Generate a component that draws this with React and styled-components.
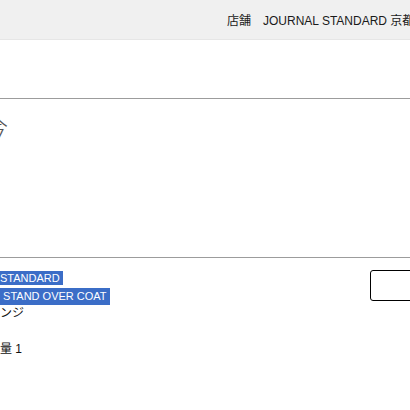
import React from 'react';
import styled, { createGlobalStyle } from 'styled-components';

const GlobalStyle = createGlobalStyle`
  html, body {
    margin: 0;
    padding: 0;
    background: #fff;
    overflow: hidden;
  }
  body {
    width: 410px;
    height: 410px;
    font-family: "Liberation Sans", "Noto Sans CJK JP", sans-serif;
    color: #111;
  }
`;

const StoreBar = styled.header`
  height: 39px;
  background: #f0f0f0;
  border-bottom: 1px solid #e6e6e6;
  display: flex;
  align-items: center;
  padding-left: 227px;
  white-space: nowrap;
  overflow: hidden;
  font-size: 12px;
  color: #1a1a1a;
`;

const TopSpace = styled.div`
  height: 58px;
`;

const Divider = styled.hr`
  margin: 0;
  border: 0;
  border-top: 1px solid #9c9c9c;
`;

const Section = styled.section`
  height: 158px;
  padding-top: 12px;
  box-sizing: border-box;
  overflow: hidden;
`;

const ClippedTitle = styled.div`
  font-size: 24px;
  line-height: 30px;
  margin-left: -16px;
  color: #555;
  font-weight: 300;
  font-family: "Noto Sans CJK JP", sans-serif;
`;

const ItemRow = styled.div`
  display: flex;
  justify-content: space-between;
  align-items: flex-start;
  padding-top: 10px;
`;

const Lines = styled.div`
  font-size: 11px;
  line-height: 18px;
  white-space: pre;
`;

const Line = styled.div`
  height: 18px;
  font-size: ${(p) => (p.$cjk ? 12 : 11)}px;
`;

const Selected = styled.span`
  display: inline-block;
  background: #3b6dc7;
  color: #fff;
  line-height: ${(p) => p.$h}px;
  padding-right: 3px;
  vertical-align: middle;
`;

const OutlineButton = styled.button`
  flex-shrink: 0;
  width: 80px;
  height: 31px;
  margin-top: 2px;
  margin-right: -40px;
  border: 1.5px solid #000;
  border-radius: 3px;
  background: #fff;
`;

export default function App() {
  return (
    <>
      <GlobalStyle />
      <StoreBar>店舗　JOURNAL STANDARD 京都店</StoreBar>
      <TopSpace />
      <Divider />
      <Section>
        <ClippedTitle>今</ClippedTitle>
      </Section>
      <Divider />
      <ItemRow>
        <Lines>
          <Line>
            <Selected $h={14}>STANDARD</Selected>
          </Line>
          <Line>
            <Selected $h={17}> STAND OVER COAT</Selected>
          </Line>
          <Line $cjk>ンジ</Line>
          <Line />
          <Line $cjk>量 1</Line>
        </Lines>
        <OutlineButton />
      </ItemRow>
    </>
  );
}
